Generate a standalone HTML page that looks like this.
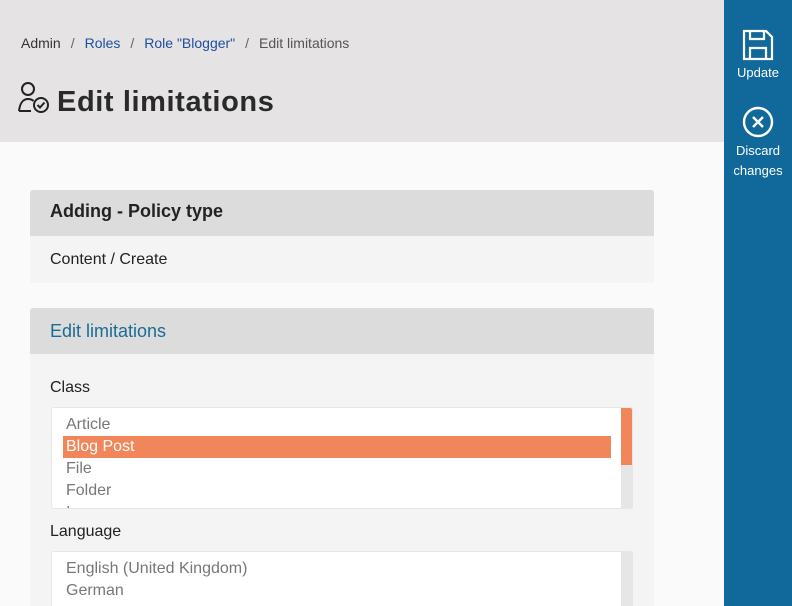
<!DOCTYPE html>
<html style="width:792px;height:606px;overflow:hidden"><head><style>
*{margin:0;padding:0;box-sizing:border-box}
body{width:792px;height:606px;overflow:hidden;background:#fafafa;font-family:"Liberation Sans",sans-serif;position:relative;color:#222}
.hdr{position:absolute;left:0;top:0;width:724px;height:142px;background:#e5e3e3}
.bc{position:absolute;left:21px;top:35px;font-size:14px;color:#333}
.bc a{color:#1e4fa0;text-decoration:none}
.bc .s{color:#666;margin:0 10px}
.bc .c{color:#555}
h1{position:absolute;left:57px;top:86px;font-size:29px;font-weight:bold;color:#2a2a2a;letter-spacing:0.6px}
.side{position:absolute;left:724px;top:0;width:68px;height:606px;background:#10699a;color:#fff;font-size:13px;text-align:center}
.card{position:absolute;left:30px;width:624px;background:#f4f4f4;border-radius:3px;overflow:hidden}
.ch{height:46px;background:#dcdcdc;padding:0 20px;line-height:42px;font-size:18px}
.lbl{position:absolute;left:20px;font-size:16px;color:#222}
.sel{position:absolute;left:21px;width:582px;background:#fff;border:1px solid #e6e6e6;border-radius:3px;overflow:hidden}
.sb{position:absolute;right:0;top:0;width:11px;height:100%;background:#e6e6e6}
.opt{height:22px;line-height:22px;width:548px;font-size:16px;color:#777;margin-left:11px;padding-left:3px}
</style></head><body>
<div class="hdr">
<div class="bc">Admin<span class="s">/</span><a>Roles</a><span class="s">/</span><a>Role "Blogger"</a><span class="s">/</span><span class="c">Edit limitations</span></div>
<svg style="position:absolute;left:18px;top:80px" width="34" height="34" viewBox="0 0 34 34" fill="none" stroke="#222" stroke-width="2"><circle cx="10" cy="9" r="6"/><path d="M1 31 C2 22 6 19 10 19 C12 19 14 19.5 15.5 21 M1 31 H13"/><circle cx="23" cy="25" r="7"/><path d="M19.5 25 L22 27.5 L26.5 22.5"/></svg>
<h1>Edit limitations</h1>
</div>
<div class="side">
<svg style="position:absolute;left:18px;top:29px" width="32" height="32" viewBox="0 0 32 32" fill="none" stroke="#fff" stroke-width="2.2"><path d="M2 2 H24 L30 8 V30 H2 Z"/><path d="M8 2 V10 H22 V2"/><path d="M8 30 V19 H24 V30"/></svg>
<div style="position:absolute;top:65px;width:68px">Update</div>
<svg style="position:absolute;left:18px;top:106px" width="32" height="32" viewBox="0 0 32 32" fill="none" stroke="#fff" stroke-width="2.4"><circle cx="16" cy="16" r="14"/><path d="M11 11 L21 21 M21 11 L11 21"/></svg>
<div style="position:absolute;top:141px;width:68px;line-height:20px">Discard<br>changes</div>
</div>
<div class="card" style="top:190px;height:93px">
<div class="ch" style="font-weight:bold">Adding - Policy type</div>
<div class="lbl" style="top:61px">Content / Create</div>
</div>
<div class="card" style="top:308px;height:300px">
<div class="ch" style="color:#1b6c94;font-size:18px;line-height:46px">Edit limitations</div>
<div class="lbl" style="top:71px">Class</div>
<div class="sel" style="top:99px;height:102px">
<div class="sb"><div style="height:57px;background:#f1865a"></div></div>
<div style="padding-top:6px">
<div class="opt">Article</div>
<div class="opt" style="background:#f2865b;color:#fff">Blog Post</div>
<div class="opt">File</div>
<div class="opt">Folder</div>
<div class="opt">Image</div>
</div></div>
<div class="lbl" style="top:215px">Language</div>
<div class="sel" style="top:243px;height:80px">
<div class="sb"></div>
<div style="padding-top:6px">
<div class="opt">English (United Kingdom)</div>
<div class="opt">German</div>
</div></div>
</div>
</body></html>
